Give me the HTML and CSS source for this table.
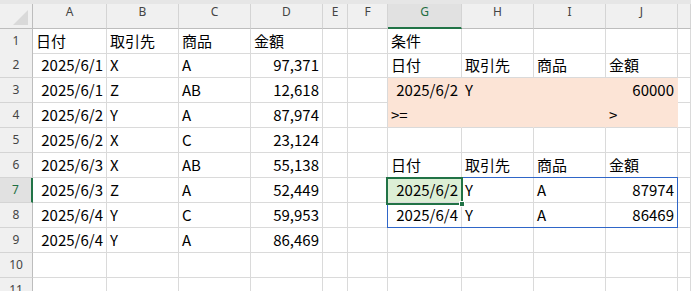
FILE: index.html
```html
<!DOCTYPE html>
<html lang="ja">
<head>
<meta charset="utf-8">
<link rel="stylesheet" href="styles.css">
</head>
<body>
<div class="sheet">
  <div class="band"></div>
  <div class="row hdr">
    <div class="corner"><span class="tri"></span></div>
    <div class="ch">A</div><div class="ch">B</div><div class="ch">C</div><div class="ch">D</div><div class="ch">E</div><div class="ch">F</div><div class="ch on">G</div><div class="ch">H</div><div class="ch">I</div><div class="ch">J</div><div class="ch"></div>
  </div>
  <div class="row first">
    <div class="rh">1</div>
    <div class="c">日付</div><div class="c">取引先</div><div class="c">商品</div><div class="c">金額</div><div class="c"></div><div class="c"></div><div class="c">条件</div><div class="c"></div><div class="c"></div><div class="c"></div><div class="c"></div>
  </div>
  <div class="row">
    <div class="rh">2</div>
    <div class="c n">2025/6/1</div><div class="c">X</div><div class="c">A</div><div class="c n">97,371</div><div class="c"></div><div class="c"></div><div class="c">日付</div><div class="c">取引先</div><div class="c">商品</div><div class="c">金額</div><div class="c"></div>
  </div>
  <div class="row">
    <div class="rh">3</div>
    <div class="c n">2025/6/1</div><div class="c">Z</div><div class="c">AB</div><div class="c n">12,618</div><div class="c"></div><div class="c"></div><div class="c n pe pe-top">2025/6/2</div><div class="c pe pe-top">Y</div><div class="c pe pe-top"></div><div class="c n pe pe-top">60000</div><div class="c"></div>
  </div>
  <div class="row">
    <div class="rh">4</div>
    <div class="c n">2025/6/2</div><div class="c">Y</div><div class="c">A</div><div class="c n">87,974</div><div class="c"></div><div class="c"></div><div class="c pe">&gt;=</div><div class="c pe"></div><div class="c pe"></div><div class="c pe">&gt;</div><div class="c"></div>
  </div>
  <div class="row">
    <div class="rh">5</div>
    <div class="c n">2025/6/2</div><div class="c">X</div><div class="c">C</div><div class="c n">23,124</div><div class="c"></div><div class="c"></div><div class="c"></div><div class="c"></div><div class="c"></div><div class="c"></div><div class="c"></div>
  </div>
  <div class="row">
    <div class="rh">6</div>
    <div class="c n">2025/6/3</div><div class="c">X</div><div class="c">AB</div><div class="c n">55,138</div><div class="c"></div><div class="c"></div><div class="c">日付</div><div class="c">取引先</div><div class="c">商品</div><div class="c">金額</div><div class="c"></div>
  </div>
  <div class="row">
    <div class="rh on">7</div>
    <div class="c n">2025/6/3</div><div class="c">Z</div><div class="c">A</div><div class="c n">52,449</div><div class="c"></div><div class="c"></div><div class="c n gr">2025/6/2</div><div class="c">Y</div><div class="c">A</div><div class="c n">87974</div><div class="c"></div>
  </div>
  <div class="row">
    <div class="rh">8</div>
    <div class="c n">2025/6/4</div><div class="c">Y</div><div class="c">C</div><div class="c n">59,953</div><div class="c"></div><div class="c"></div><div class="c n">2025/6/4</div><div class="c">Y</div><div class="c">A</div><div class="c n">86469</div><div class="c"></div>
  </div>
  <div class="row">
    <div class="rh">9</div>
    <div class="c n">2025/6/4</div><div class="c">Y</div><div class="c">A</div><div class="c n">86,469</div><div class="c"></div><div class="c"></div><div class="c"></div><div class="c"></div><div class="c"></div><div class="c"></div><div class="c"></div>
  </div>
  <div class="row">
    <div class="rh">10</div>
    <div class="c"></div><div class="c"></div><div class="c"></div><div class="c"></div><div class="c"></div><div class="c"></div><div class="c"></div><div class="c"></div><div class="c"></div><div class="c"></div><div class="c"></div>
  </div>
  <div class="row">
    <div class="rh">11</div>
    <div class="c"></div><div class="c"></div><div class="c"></div><div class="c"></div><div class="c"></div><div class="c"></div><div class="c"></div><div class="c"></div><div class="c"></div><div class="c"></div><div class="c"></div>
  </div>

  <div class="range"></div>
  <div class="active"></div>
  <div class="handle"></div>
</div>
</body>
</html>
```

FILE: styles.css
```css
* { box-sizing: border-box; }
html, body { margin: 0; padding: 0; background: #fff; }
body { width: 691px; height: 291px; overflow: hidden; }

.sheet {
  position: relative;
  width: 691px;
  font-family: "Noto Sans CJK JP", "Noto Sans", sans-serif;
  font-size: 15px;
  color: #000;
}

.band { height: 4px; background: #e6e6e6; }

.row {
  display: grid;
  grid-template-columns: 33px 74px 72px 72px 72px 25px 40px 74px 72px 72px 72px 1fr;
  height: 25px;
}
.row.first { height: 24px; }

.hdr { height: 25px; background: #f0f0f0; }

.corner {
  position: relative;
  border-right: 1px solid #bdbdbd;
  border-bottom: 1px solid #bdbdbd;
}
.tri {
  position: absolute;
  right: 4px;
  bottom: 3px;
  width: 15px;
  height: 15px;
  background: #d9d9d9;
  clip-path: polygon(100% 0, 100% 100%, 0 100%);
}

.ch {
  font-family: "Noto Sans", "Liberation Sans", sans-serif;
  font-size: 12px;
  color: #444;
  text-align: center;
  line-height: 16px;
  border-right: 1px solid #d4d4d4;
  border-bottom: 1px solid #bdbdbd;
}
.ch.on {
  background: #e1e1e1;
  color: #1e6e42;
  border-bottom: 2px solid #217346;
}

.rh {
  font-family: "Noto Sans", "Liberation Sans", sans-serif;
  font-size: 12px;
  color: #444;
  background: #f0f0f0;
  text-align: center;
  line-height: 24px;
  border-right: 1px solid #bdbdbd;
  border-bottom: 1px solid #d4d4d4;
}
.rh.on {
  background: #e1e1e1;
  color: #1e6e42;
  border-right: 2px solid #217346;
}

.c {
  padding: 0 3px;
  line-height: 23px;
  white-space: nowrap;
  border-right: 1px solid #dadada;
  border-bottom: 1px solid #dadada;
}
.n { text-align: right; }

.pe { background: #fce4d6; border-right-color: #fce4d6; }
.pe-top { border-bottom-color: #fce4d6; }
.gr { background: #dcefd5; }

.range {
  position: absolute;
  left: 387px;
  top: 177px;
  width: 291px;
  height: 51px;
  border: 1px solid #2f66c8;
}
.active {
  position: absolute;
  left: 386px;
  top: 177px;
  width: 77px;
  height: 28px;
  border: 2px solid #217346;
}
.handle {
  position: absolute;
  left: 459px;
  top: 201px;
  width: 6px;
  height: 6px;
  background: #217346;
  border: 1px solid #fff;
}
```
